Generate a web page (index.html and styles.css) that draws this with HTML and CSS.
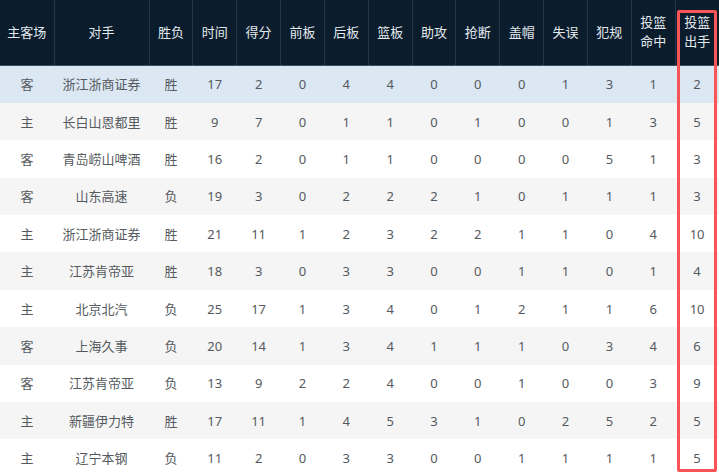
FILE: index.html
```html
<!DOCTYPE html>
<html lang="zh">
<head>
<meta charset="utf-8">
<link rel="stylesheet" href="styles.css">
</head>
<body>
<div class="wrap">
<table class="stats">
<colgroup>
<col class="c-home"><col class="c-opp"><col span="13" class="c-num">
</colgroup>
<thead>
<tr>
<th>主客场</th><th>对手</th><th>胜负</th><th>时间</th><th>得分</th><th>前板</th><th>后板</th><th>篮板</th><th>助攻</th><th>抢断</th><th>盖帽</th><th>失误</th><th>犯规</th><th>投篮<br>命中</th><th>投篮<br>出手</th>
</tr>
</thead>
<tbody>
<tr class="hover"><td>客</td><td>浙江浙商证券</td><td>胜</td><td>17</td><td>2</td><td>0</td><td>4</td><td>4</td><td>0</td><td>0</td><td>0</td><td>1</td><td>3</td><td>1</td><td>2</td></tr>
<tr><td>主</td><td>长白山恩都里</td><td>胜</td><td>9</td><td>7</td><td>0</td><td>1</td><td>1</td><td>0</td><td>1</td><td>0</td><td>0</td><td>1</td><td>3</td><td>5</td></tr>
<tr><td>客</td><td>青岛崂山啤酒</td><td>胜</td><td>16</td><td>2</td><td>0</td><td>1</td><td>1</td><td>0</td><td>0</td><td>0</td><td>0</td><td>5</td><td>1</td><td>3</td></tr>
<tr><td>客</td><td>山东高速</td><td>负</td><td>19</td><td>3</td><td>0</td><td>2</td><td>2</td><td>2</td><td>1</td><td>0</td><td>1</td><td>1</td><td>1</td><td>3</td></tr>
<tr><td>主</td><td>浙江浙商证券</td><td>胜</td><td>21</td><td>11</td><td>1</td><td>2</td><td>3</td><td>2</td><td>2</td><td>1</td><td>1</td><td>0</td><td>4</td><td>10</td></tr>
<tr><td>主</td><td>江苏肯帝亚</td><td>胜</td><td>18</td><td>3</td><td>0</td><td>3</td><td>3</td><td>0</td><td>0</td><td>1</td><td>1</td><td>0</td><td>1</td><td>4</td></tr>
<tr><td>主</td><td>北京北汽</td><td>负</td><td>25</td><td>17</td><td>1</td><td>3</td><td>4</td><td>0</td><td>1</td><td>2</td><td>1</td><td>1</td><td>6</td><td>10</td></tr>
<tr><td>客</td><td>上海久事</td><td>负</td><td>20</td><td>14</td><td>1</td><td>3</td><td>4</td><td>1</td><td>1</td><td>1</td><td>0</td><td>3</td><td>4</td><td>6</td></tr>
<tr><td>客</td><td>江苏肯帝亚</td><td>负</td><td>13</td><td>9</td><td>2</td><td>2</td><td>4</td><td>0</td><td>0</td><td>1</td><td>0</td><td>0</td><td>3</td><td>9</td></tr>
<tr><td>主</td><td>新疆伊力特</td><td>胜</td><td>17</td><td>11</td><td>1</td><td>4</td><td>5</td><td>3</td><td>1</td><td>0</td><td>2</td><td>5</td><td>2</td><td>5</td></tr>
<tr><td>主</td><td>辽宁本钢</td><td>负</td><td>11</td><td>2</td><td>0</td><td>3</td><td>3</td><td>0</td><td>0</td><td>1</td><td>1</td><td>1</td><td>1</td><td>5</td></tr>
</tbody>
</table>
<div class="mark"></div>
</div>
</body>
</html>
```
FILE: styles.css
```css
html, body {
  margin: 0;
  padding: 0;
  background: #ffffff;
}
body {
  font-family: "Noto Sans", "Noto Sans CJK SC", sans-serif;
  width: 719px;
  height: 473px;
  overflow: hidden;
}
.wrap {
  position: relative;
  width: 719px;
}
.stats {
  width: 719px;
  border-collapse: collapse;
  table-layout: fixed;
  font-size: 13px;
}
.c-home { width: 54px; }
.c-opp { width: 95px; }
.stats thead th {
  height: 65px;
  padding: 0;
  background: #0b1d2d;
  color: #e3e9ee;
  font-weight: normal;
  line-height: 19px;
  text-align: center;
  border-left: 1px solid #24384a;
  border-bottom: 1px solid #3c4f60;
  box-sizing: border-box;
}
.stats thead th:first-child { border-left: none; }
.stats tbody td {
  height: 37.4px;
  padding: 0;
  text-align: center;
  color: #555a60;
  line-height: 18px;
}
.stats tbody tr:nth-child(even) td { background: #f5f5f5; }
.stats tbody tr.hover td { background: #dbe7f2; }
.mark {
  position: absolute;
  left: 677px;
  top: 10px;
  width: 40px;
  height: 462px;
  border: 3px solid #fa5457;
  border-radius: 2px;
  box-sizing: border-box;
}
```
